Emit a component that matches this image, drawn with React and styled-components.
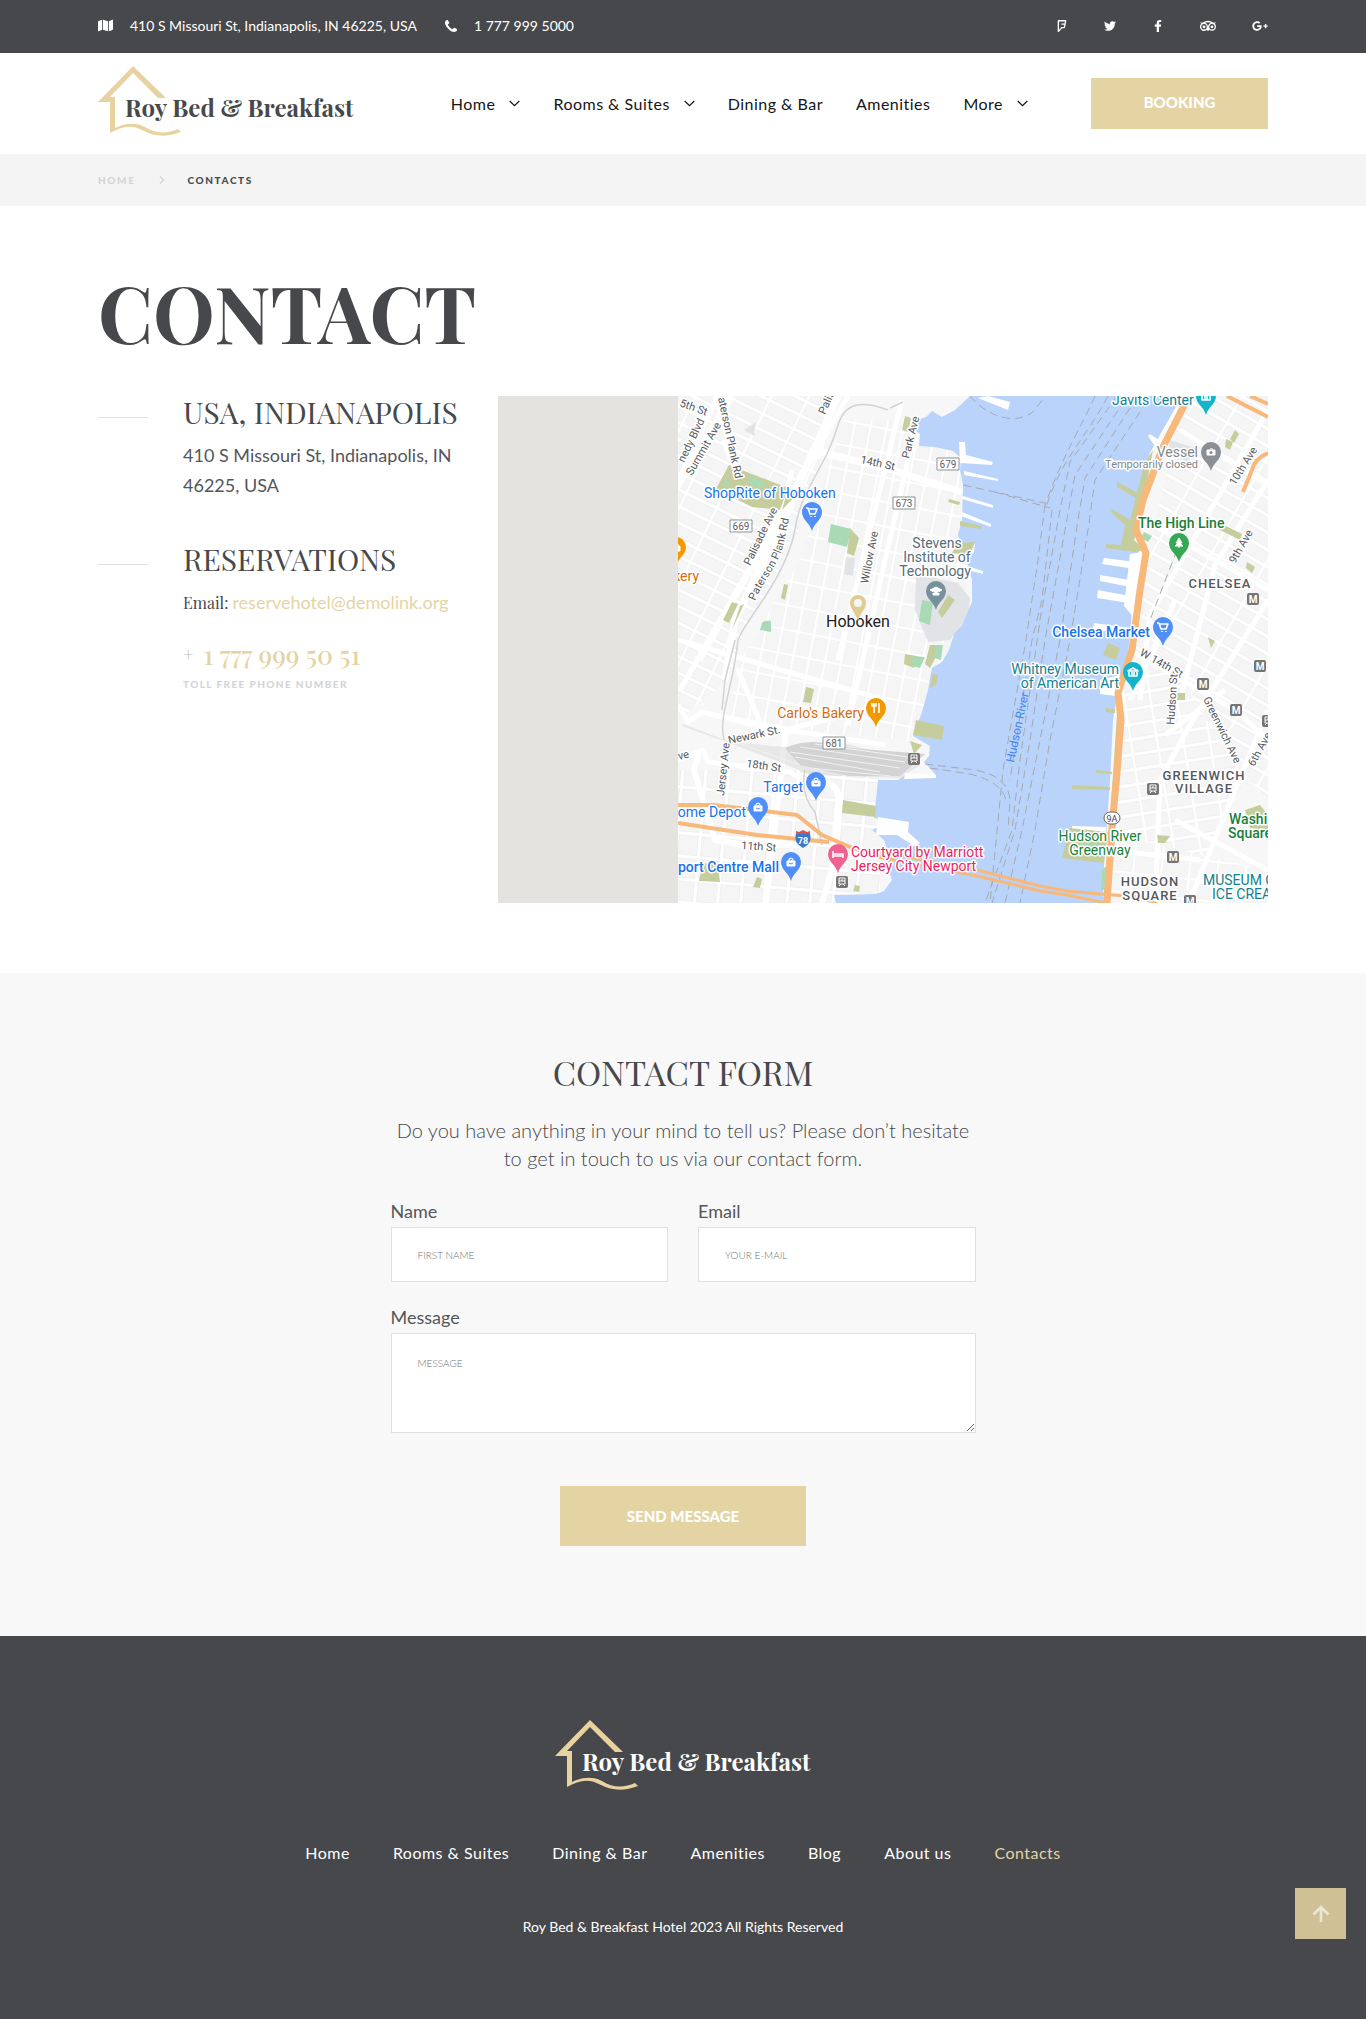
import React from "react";
import styled, { createGlobalStyle, css } from "styled-components";
import { FaMap, FaTwitter, FaFacebookF, FaFoursquare, FaTripadvisor, FaGooglePlusG } from "react-icons/fa";

const c = { dark: "#47484b", gold: "#e5d4a3", grey: "#f4f4f4", pale: "#f8f8f8", mute: "#d3d4d6", text: "#55565a" };
const serif = '"Playfair Display", "Liberation Serif", serif';

const Global = createGlobalStyle`
  *, *::before, *::after { box-sizing: border-box; }
  body { margin: 0; background: #fff; color: ${c.dark}; font-family: Lato, sans-serif; font-size: 16px; }
  a { color: inherit; text-decoration: none; }
  h1, h2, p { margin: 0; }
`;

const Container = styled.div`
  width: 100%;
  max-width: 1200px;
  margin: 0 auto;
  padding: 0 15px;
`;
const TopBar = styled.div`background: ${c.dark}; color: #fff;`;
const TopInner = styled(Container)`
  display: flex;
  justify-content: space-between;
  align-items: center;
  min-height: 53px;
  padding-bottom: 2px;
`;
const Contacts = styled.div`
  display: flex;
  gap: 28px;
  font-size: 14px;
  a { display: flex; align-items: center; gap: 17px; }
`;
const Socials = styled.div`
  display: flex;
  align-items: center;
  gap: 36px;
`;
const SocialLink = styled.a`
  display: flex;
  svg { display: block; width: auto; height: ${(p) => p.$size}px; }
`;
const HeaderInner = styled(Container)`
  display: flex;
  align-items: center;
  justify-content: space-between;
  min-height: 101px;
`;
const LogoSvg = styled.svg`
  display: block;
  overflow: visible;
  width: 256px;
  height: 76px;
  text { font: 700 24px ${serif}; fill: ${(p) => p.$ink}; }
`;
const HeaderRight = styled.div`display: flex; align-items: center; gap: 63px;`;
const Nav = styled.nav`
  display: flex;
  align-items: center;
  gap: 33px;
  color: #151515;
  letter-spacing: 0.03em;
  a { display: flex; align-items: center; gap: 14px; }
`;
const goldButton = css`
  display: flex;
  align-items: center;
  justify-content: center;
  border: 0;
  background: ${c.gold};
  color: #fff;
  font: 900 15px Lato, sans-serif;
  text-transform: uppercase;
  cursor: pointer;
`;
const Booking = styled.button`${goldButton} width: 177px; height: 51px; padding-bottom: 4px;`;
const Crumbs = styled.nav`background: ${c.grey}; font-size: 10px; font-weight: 900; letter-spacing: 0.16em;`;
const CrumbsInner = styled(Container)`
  display: flex;
  align-items: center;
  gap: 23px;
  min-height: 52px;
  color: ${c.mute};
`;
const Current = styled.span`color: ${c.dark};`;

const ContactSection = styled.section`padding: 64px 0 70px;`;
const Title = styled.h1`font: 700 78px/84px ${serif}; margin-bottom: 42px;`;
const Columns = styled.div`display: flex; gap: 30px;`;
const Details = styled.div`width: 370px; flex: none;`;
const Block = styled.article`
  display: grid;
  grid-template-columns: 50px 1fr;
  column-gap: 35px;
  margin-bottom: 43px;
  &::before { content: ""; height: 1px; margin-top: 21px; background: #e1e1e1; }
`;
const BlockTitle = styled.h2`font: 400 30px/32px ${serif}; margin-bottom: 12px; white-space: nowrap;`;
const Text = styled.p`font-size: 18px; line-height: 30px; color: ${c.text};`;
const EmailLine = styled(Text)`
  font-family: ${serif};
  font-size: 16px;
  color: ${c.dark};
  a { font-size: 18px; font-family: Lato, sans-serif; color: ${c.gold}; }
`;
const Phone = styled.a`
  display: flex;
  gap: 10px;
  margin-top: 20px;
  font: 500 26px/34px ${serif};
  color: ${c.gold};
  span { font-size: 18px; line-height: 32px; font-weight: 400; color: #bbb; }
`;
const Toll = styled.p`font-size: 10px; line-height: 24px; font-weight: 900; letter-spacing: 0.14em; color: ${c.mute};`;
const MapFrame = styled.div`flex: 1; min-width: 0; background: #e5e3df;`;
const MapSvg = styled.svg`display: block; width: 100%; height: 507px; font-family: Roboto, sans-serif;`;

const FormSection = styled.section`background: ${c.pale}; padding: 78px 15px 90px;`;
const Form = styled.form`max-width: 585px; margin: 0 auto; display: flex; flex-direction: column;`;
const FormTitle = styled.h2`font: 400 34px/42px ${serif}; text-align: center; margin-bottom: 23px;`;
const Lead = styled.p`font-size: 20px; line-height: 28px; font-weight: 300; text-align: center; margin-bottom: 25px;`;
const Row = styled.div`display: grid; grid-template-columns: 1fr 1fr; gap: 30px; margin-bottom: 21px;`;
const Field = styled.label`display: flex; flex-direction: column; gap: 2px; font-size: 18px; line-height: 28px; color: ${c.text};`;
const box = css`
  width: 100%;
  border: 1px solid #dfe0e6;
  border-radius: 0;
  background: #fff;
  font: 300 10px/14px Lato, sans-serif;
  color: ${c.dark};
  &::placeholder { color: #6f7074; opacity: 1; text-transform: uppercase; }
`;
const Input = styled.input`${box} height: 55px; padding: 0 26px;`;
const Area = styled.textarea`${box} height: 100px; padding: 22px 26px; resize: vertical;`;
const Send = styled.button`${goldButton} width: 246px; height: 60px; margin: 53px auto 0;`;

const Footer = styled.footer`
  background: ${c.dark};
  color: #fff;
  display: flex;
  flex-direction: column;
  align-items: center;
  padding: 84px 15px 81px;
`;
const FooterNav = styled.nav`
  display: flex;
  gap: 43px;
  margin: 45px 0 50px;
  line-height: 24px;
  letter-spacing: 0.03em;
`;
const FooterLink = styled.a`color: ${(p) => (p.$active ? c.gold : "#fff")};`;
const Copy = styled.p`font-size: 14px; line-height: 24px;`;
const ToTop = styled.button`
  position: fixed;
  right: 20px;
  bottom: 80px;
  width: 51px;
  height: 51px;
  display: grid;
  place-items: center;
  border: 0;
  background: #cfc195;
  color: #e9e6dd;
`;

const Logo = ({ ink }) => (
  <LogoSvg viewBox="0 0 256 76" $ink={ink} role="img" aria-label="Roy Bed & Breakfast">
    <path fill="#e8d3a0" d="M0 36 35 0 68 32H60L35 7 12 31H17V62C27 57 38 56 47 61 58 68 69 68 80 63L83 66C70 71 57 71 46 65 34 58 24 60 12 67V36Z" />
    <text x="27" y="51">Roy Bed &amp; Breakfast</text>
  </LogoSvg>
);

const PhoneIcon = () => (
  <svg width="12" height="12" viewBox="0 0 1408 1408" fill="currentColor" aria-hidden="true">
    <path d="M1408 1112q0 27-10 70.5t-20.5 68.5q-21 50-122 106-94 51-186 51-27 0-53-3.5t-57.5-12.5-47-14.5-55.5-20.5-49-18q-98-35-175-83-127-79-264-216t-216-264q-48-77-83-175-3-9-18-49t-20.5-55.5-14.5-47-12.5-57.5-3.5-53q0-92 51-186 56-101 106-122 25-10 68.5-20.5t70.5-10.5q14 0 21 3 18 6 53 76 11 19 30 54t35 63.5 31 53.5q3 4 17.5 25t21.5 35.5 7 28.5q0 20-28.5 50t-62 55-62 53-28.5 46q0 9 5 22.5t8.5 20.5 14 24 11.5 19q76 137 174 235t235 174q2 1 19 11.5t24 14 20.5 8.5 22.5 5q18 0 46-28.5t53-62 55-62 50-28.5q14 0 28.5 7t35.5 21.5 25 17.5q25 15 53.5 31t63.5 35 54 30q70 35 76 53 3 7 3 21z" />
  </svg>
);
const ChevronDown = () => (
  <svg width="11" height="7" viewBox="0 0 11 7" fill="none" stroke="currentColor" strokeWidth="1.2" aria-hidden="true"><path d="M.7 1 5.5 5.6 10.3 1" /></svg>
);
const ChevronRight = () => (
  <svg width="6" height="8" viewBox="0 0 6 8" fill="none" stroke="currentColor" strokeWidth="1.2" aria-hidden="true"><path d="M1 .5 4.6 4 1 7.5" /></svg>
);
const ArrowUp = () => (
  <svg width="18" height="18" viewBox="0 0 18 18" fill="none" stroke="currentColor" strokeWidth="2.6" aria-hidden="true"><path d="M9 17V2.500M1.500 9.500 9 2 16.500 9.500" /></svg>
);

const glyphs = {
  cart: "M-6-4h2l2 6h5l2-5h-8M-1 4v1M3 4v1",
  bag: "M-4-1h8v5h-8zM-2-1v-2q2-2 4 0v2",
  fork: "M-2-5v10M-4-5v3h4v-3M3-5v10",
  tree: "M0-5-3 0h2l-3 3h8l-3-3h2zM0 3v2",
  cap: "M-6-1 0-4 6-1 0 2zM-3 2v2h6v-2",
  bed: "M-5-3v7M-5 2H5V0h-9M5 2v2",
  museum: "M-5-1 0-4 5-1zM-4 0v4h8v-4M-1 0v4M1 0v4",
  camera: "M-4-2h8v5h-8zM-1-3h3M0 0v1",
};
const solid = ["bag", "tree", "cap", "camera"];
const Pin = ({ x, y, fill, glyph }) => (
  <g transform={`translate(${x} ${y})`}>
    <path d="M0 19C-2 11-10 8-10 0A10 10 0 0 1 10 0C10 8 2 11 0 19Z" fill={fill} />
    <path d={glyphs[glyph]} fill={solid.includes(glyph) ? "#fff" : "none"} stroke="#fff" strokeWidth={solid.includes(glyph) ? 1 : 1.6} />
    {glyph === "bag" && <path d="M-2 1Q0 3 2 1M-1-1.5V-2.500Q0-3.200 1-2.500V-1.500" stroke={fill} fill="none" />}
    {glyph === "camera" && <circle cx="0" cy=".5" r="1.6" fill={fill} />}
  </g>
);
const pins = [
  [812, 512, "#4f8ff7", "cart"], [676, 547, "#f29900", "bag"], [1206, 396, "#12b5cb", "museum"], [1211, 452, "#8a8f96", "camera"],
  [1179, 543, "#34a853", "tree"], [1163, 627, "#4f8ff7", "cart"], [936, 591, "#78909c", "cap"], [876, 708, "#f29900", "fork"],
  [816, 782, "#4f8ff7", "bag"], [758, 807, "#4f8ff7", "bag"], [791, 862, "#4f8ff7", "bag"], [838, 854, "#f06292", "bed"], [1133, 672, "#12b5cb", "museum"],
];
const blue = "#1a73e8", teal = "#12818f", green = "#188038", orange = "#d56e0c", pink = "#e91e63", slate = "#546e7a", gray = "#80868b", street = "#55585d";
/* x, baseline, text, colour, anchor, weight, size */
const places = [
  [704, 498, "ShopRite of Hoboken", blue], [699, 581, "kery", orange, "end"], [1112, 405, "Javits Center", teal],
  [1198, 457, "Vessel", gray, "end"], [1198, 468, "Temporarily closed", gray, "end", 400, 11], [1138, 528, "The High Line", green, "start", 500],
  [1150, 637, "Chelsea Market", blue, "end", 500], [937, 548, "Stevens", slate, "middle"], [937, 562, "Institute of", slate, "middle"],
  [935, 576, "Technology", slate, "middle"], [864, 718, "Carlo's Bakery", orange, "end"], [803, 792, "Target", blue, "end"],
  [746, 817, "ome Depot", blue, "end"], [779, 872, "port Centre Mall", blue, "end", 500], [851, 857, "Courtyard by Marriott", pink],
  [851, 871, "Jersey City Newport", pink], [1119, 674, "Whitney Museum", teal, "end"], [1119, 688, "of American Art", teal, "end"],
  [1100, 841, "Hudson River", green, "middle"], [1100, 855, "Greenway", green, "middle"], [1229, 824, "Washi", green, "start", 500],
  [1228, 838, "Square", green, "start", 500], [1203, 885, "MUSEUM O", teal], [1212, 899, "ICE CREA", teal],
];
const areas = [[1220, 588, "CHELSEA"], [1204, 780, "GREENWICH"], [1204, 793, "VILLAGE"], [1150, 886, "HUDSON"], [1150, 900, "SQUARE"]];
/* x, baseline, angle, text */
const streets = [
  [679, 406, 20, "5th St"], [684, 463, -64, "nedy Blvd"], [692, 476, -60, "Summit Ave"], [718, 398, 78, "aterson Plank Rd"],
  [825, 415, -66, "Palis"], [860, 463, 12, "14th St"], [750, 566, -64, "Palisade Ave"], [868, 584, -79, "Willow Ave"],
  [909, 459, -76, "Park Ave"], [1235, 486, -58, "10th Ave"], [1235, 564, -60, "9th Ave"], [729, 744, -12, "Newark St."],
  [724, 796, -84, "Jersey Ave"], [746, 767, 8, "18th St"], [679, 760, -14, "ve"], [741, 849, 4, "11th St"],
  [1139, 655, 29, "W 14th St"], [1174, 725, -86, "Hudson St"], [1203, 699, 64, "Greenwich Ave"], [1254, 767, -61, "6th Ave"],
];
const shields = [[741, 526, "669"], [948, 464, "679"], [904, 503, "673"], [834, 743, "681"]];
const stations = [[1253, 599, "M"], [1260, 666, "M"], [1203, 684, "M"], [1236, 710, "M"], [1173, 857, "M"], [1190, 901, "M"], [914, 759], [1153, 789], [1268, 721], [842, 882]];

const Grid = ({ id, w, h, angle }) => (
  <pattern id={id} width={w} height={h} patternUnits="userSpaceOnUse" patternTransform={`rotate(${angle})`}>
    <rect width={w} height={h} fill="#f5f5f6" />
    <path d={`M0 ${h / 2}H${w}M${w / 2} 0V${h}`} stroke="#e9eaec" strokeWidth="4" />
    <path d={`M0 ${h / 2}H${w}M${w / 2} 0V${h}`} stroke="#fff" strokeWidth="3" />
  </pattern>
);

const CityMap = () => (
  <MapSvg viewBox="498 396 770 507" preserveAspectRatio="xMidYMid slice" role="img" aria-label="Map of Hoboken">
    <defs>
      <clipPath id="tiles"><rect x="678" y="396" width="590" height="507" /></clipPath>
      <Grid id="heights" w={34} h={15} angle={26} />
      <Grid id="hoboken" w={16} h={24} angle={11} />
      <Grid id="jersey" w={23} h={23} angle={5} />
      <Grid id="chelsea" w={52} h={15} angle={30} />
      <Grid id="village" w={26} h={15} angle={-9} />
      <Grid id="soho" w={28} h={20} angle={6} />
      <path id="plank" d="M755 601C764 578 780 566 785 538L793 500" />
    </defs>
    <g clipPath="url(#tiles)" fill="none" strokeLinejoin="round">
      <rect x="678" y="396" width="590" height="507" fill="#f7f7f8" />
      <path fill="url(#heights)" d="M678 396H838L800 530 745 630 728 680 678 720Z" />
      <path fill="url(#hoboken)" d="M842 420H965V700L920 742 730 722 735 670 800 560Z" />
      <path fill="url(#jersey)" d="M678 770H880V903H678Z" />
      <path fill="url(#chelsea)" d="M1185 396H1268V800L1225 750 1125 650Z" />
      <path fill="url(#village)" d="M1120 690 1170 660 1225 750 1245 780 1205 860 1112 830Z" />
      <path fill="url(#soho)" d="M1112 835 1268 870V903H1100Z" />

      <g stroke="#fff" strokeWidth="5">
        <path d="M718 396 678 482M730 396 645 545M848 396 680 690M838 396 782 515 700 660M724 440 735 475 745 497 782 512 792 470" />
        <path strokeWidth="7" d="M838 396 780 525 735 620 725 680M820 452 885 468 962 492" />
        <path d="M902 400 838 660M915 430 885 560M885 560 848 725M678 640 885 700M738 670 760 722M678 705 688 722 702 712 760 726 885 745M785 730 885 705M678 760 703 750 708 762 790 772 812 785" />
        <path d="M786 730 766 903M700 750 694 770 715 840 745 845 800 845M716 396 740 480M820 780Q842 785 838 805L832 870 822 903" strokeWidth="6" />
        <path d="M1268 410 1150 615 1140 700M1268 480 1215 565 1180 700M1268 600 1190 725 1160 780 1155 903M1180 430 1268 485M1145 520 1268 590M1130 650 1235 710 1268 740M1268 710 1190 900M1175 820 1268 870M1110 850 1200 860M1165 735 1225 690M1175 600 1130 700" />
      </g>
      <g stroke="#d2d3d5" strokeWidth="1.5">
        <path d="M888 410C860 400 845 403 838 425 825 470 800 490 795 530 785 580 745 620 738 640 733 690 718 715 724 740M890 408 903 402M735 640 725 680 722 710M805 770Q800 795 815 812L822 845" />
      </g>
      <g fill="#d3d3d3">
        <path d="M682 726 735 745 780 762 810 775 900 778 920 765V755L880 753 840 742 785 747 730 742 683 724Z" opacity=".45" />
        <path d="M785 748Q810 736 850 748L925 754 900 776 850 776 800 765Z" />
      </g>
      <path d="M790 752 900 768M800 747 905 762M810 768 890 776M735 742 800 765M795 757 880 772M815 744 915 758" stroke="#f1f1f1" />
      <path fill="#e2e3e7" d="M916 576 934 578 958 583 970 598 969 615 950 640 928 642 915 610ZM744 430 756 422 754 436ZM846 557 855 558 853 576 844 574ZM1170 440 1195 448 1188 462 1168 452Z" />

      <path fill="#b9d3fb" d="M970 396 955 410 942 417 932 411 926 417 916 420 914 430 920 434 919 446 935 447 953 451 961 458 960 470 963 485 962 520 958 535 961 545 975 543 974 552 967 562 972 580 972 602 962 625 954 634 949 650 942 662 932 668 928 690 922 712 913 736 930 746 929 756 924 762 936 775 905 775 898 780 878 780 874 818 888 820 880 826 872 830 884 840 888 852 887 866 892 880 884 891 876 894 834 895 836 903H1103L1104 865 1110 780 1113 720 1118 690 1128 655 1133 600 1136 560 1140 548 1128 532 1136 500 1146 462 1160 435 1180 400 1182 396Z" />
      <path fill="#fff" d="M878 817 909 822 908 832 920 843 914 846 897 835 876 835ZM988 396 1010 402 1008 410 978 398ZM959 442 965 442 966 455 993 462 992 465 960 463ZM964 471 998 479 998 481 964 475ZM963 496 993 505V508L962 499ZM962 512 991 524V527L961 516ZM960 564 983 571V574L960 568ZM1104 558 1136 562 1135 569 1102 564ZM1100 575 1135 581V588L1100 581ZM1098 590 1135 597V604L1097 598ZM1094 623 1130 628V635L1093 629ZM1100 680 1120 675 1116 696 1100 694ZM905 773 936 775V778L904 779ZM1072 826 1106 827 1105 840H1072ZM1130 554 1142 552 1136 620 1124 606ZM1148 436 1150 434 1162 442 1156 448Z" />
      <path stroke="#fff" strokeWidth="2" d="M1150 455 1180 402" />

      <g fill="#c6cd9c">
        <path d="M729 465 788 488 780 510 752 507 716 489ZM788 488 799 492 782 510ZM850 528 859 538 854 556 847 553ZM905 416 911 418 908 432 902 430ZM949 499 960 502 959 505 948 502ZM960 521 982 526 981 529 960 526ZM958 543 975 542 970 555 952 553ZM732 602 738 604 729 623 723 620ZM740 606 744 604 732 630ZM784 584 788 585 785 600 781 598ZM806 687 814 689 811 703 803 702ZM916 720 944 726 942 740 913 735ZM910 741 922 745 914 754ZM843 800 876 806 875 817 842 813ZM703 863 718 865 720 882 699 881ZM757 877 762 879 760 888 753 887ZM855 885 860 886 859 892 853 891Z" />
        <path d="M1145 462 1153 450 1142 510 1134 540 1145 550 1135 552 1106 548V544L1121 545 1125 525 1111 512 1112 509 1130 520ZM1117 482 1138 493 1136 498 1117 487ZM1118 698 1110 820 1103 903H1109L1122 720ZM1106 708 1115 709V713L1106 712ZM1096 770 1112 772V774L1096 773ZM1072 785 1110 787V790L1072 789ZM1070 828 1108 832 1104 863 1062 858ZM1222 524 1242 534 1240 540 1218 529ZM1247 562 1255 567 1252 573 1246 568ZM1208 637 1215 641 1211 648ZM1177 693 1185 693V700H1177ZM1157 835 1170 836 1165 843H1158ZM1245 810 1260 805 1268 815V830L1250 828ZM1108 643 1120 648 1116 660 1103 655ZM1235 430 1239 434 1234 443 1230 439ZM1226 439 1233 442 1230 450 1225 447Z" />
        <path d="M905 654 917 656 914 668 904 664ZM930 645 942 645 930 668 925 664ZM932 674 938 675 936 685 930 688ZM948 595 955 600 942 618 938 612Z" />
      </g>
      <path fill="#a8dab5" d="M831 524 851 529 847 547 828 542ZM750 476 766 483 762 489 748 483ZM725 479 731 484 722 488ZM922 600 933 602 930 625 919 621ZM936 645 943 645 941 660 934 658ZM762 623Q764 620 771 621V632L760 630ZM913 656 925 657 920 668 912 666ZM1144 532 1152 536 1148 542 1141 538ZM1080 842 1105 845 1104 855 1080 850ZM1102 870 1107 865 1106 890H1101Z" />

      <g stroke="#a5a9b0" strokeDasharray="8 5" strokeWidth="1">
        <path d="M1095 396C1080 430 1065 450 1045 505M1108 396C1085 440 1060 460 1046 508M1117 396 1070 462 1060 510 1040 620 1020 760 1012 830 985 903M1125 400 1075 475 1065 530 1045 640 1030 740 1015 830 992 903M1130 408 1085 478 1078 520 1060 640 1040 740 1022 830 1005 903M1140 412 1095 480 1088 530 1070 640 1050 740 1035 830 1020 903M1045 505 1038 560 1026 640 1003 770 990 903M1052 510 1042 600 1032 640 1010 780M963 485 1045 503M995 492 1050 508M925 764 975 770Q1008 776 1010 800L1008 830M930 768 970 774Q1002 782 1006 800M970 396C990 420 1020 425 1035 410L1045 396M1177 550 1150 620" />
      </g>
      <g stroke="#f7b87a" strokeWidth="8">
        <path strokeWidth="7" d="M1189 396 1163 447 1143 500 1136 530 1146 553 1140 590 1132 650 1118 693 1121 720 1117 773 1112 827 1107 903" />
        <path strokeWidth="4" d="M678 805H713L797 815 822 835 850 847 890 860M678 823 757 835 829 842" />
        <path strokeWidth="3" d="M880 857 977 876 1040 891 1067 895 1105 903M880 852 977 870 1040 886 1067 891 1100 894 1140 897 1160 905" />
        <path strokeWidth="4" d="M1227 396 1268 417M1250 396 1268 404M1268 453Q1255 458 1252 470L1243 492" />
      </g>

      <g fontSize="11" fill={street} stroke="#fff" strokeWidth="3" paintOrder="stroke">
        {streets.map(([x, y, a, t]) => <text key={t + x} transform={`translate(${x} ${y}) rotate(${a})`}>{t}</text>)}
        <text><textPath href="#plank">Paterson Plank Rd</textPath></text>
      </g>
      <text transform="translate(1014 763) rotate(-78)" fontSize="12" fill="#4285f4">Hudson River</text>
      {shields.map(([x, y, t]) => (
        <g key={t}><rect x={x - 11} y={y - 6} width="22" height="12" fill="#fff" stroke="#8e9196" /><text x={x} y={y + 4} fontSize="10" fill="#5f6368" textAnchor="middle">{t}</text></g>
      ))}
      {stations.map(([x, y, t]) => (
        <g key={`${x}-${y}`} transform={`translate(${x} ${y})`}>
          <rect x="-6" y="-6" width="12" height="12" rx="2" fill="#757575" />
          {t ? <text y="4" fontSize="10" fontWeight="700" fill="#fff" textAnchor="middle">{t}</text> : <path d="M-3-4H3V2H-3ZM-3 4-1 2M3 4 1 2M-3-1H3M0-3V-1" stroke="#fff" />}
        </g>
      ))}
      {pins.map(([x, y, f, g]) => <Pin key={`${x}-${y}`} x={x} y={y} fill={f} glyph={g} />)}
      <g stroke="#fff" strokeWidth="3" paintOrder="stroke">
        {places.map(([x, y, t, f, anchor = "start", w = 400, s = 14]) => (
          <text key={t} x={x} y={y} fill={f} textAnchor={anchor} fontWeight={w} fontSize={s}>{t}</text>
        ))}
        {areas.map(([x, y, t]) => <text key={t} x={x} y={y} fill="#55585d" textAnchor="middle" fontSize="13" fontWeight="500" letterSpacing="1">{t}</text>)}
        <text x="826" y="627" fontSize="16" fill="#202124">Hoboken</text>
      </g>
      <path fillRule="evenodd" fill="#e0cc93" d="M858 621C856 613 850 609 850 603A8 8 0 0 1 866 603C866 609 860 613 858 621ZM858 599A4 4 0 1 0 858 607 4 4 0 1 0 858 599Z" />
      <rect x="1104" y="812" width="16" height="12" rx="6" fill="#fff" stroke="#666" />
      <text x="1112" y="822" fontSize="9" fill="#444" textAnchor="middle">9A</text>
      <path fill="#3b78c9" d="M796 834H810Q813 843 803 848 793 843 796 834Z" />
      <path fill="#d9534f" d="M796 831 799 832 803 830 807 832 810 831V834H796Z" />
      <text x="803" y="844" fontSize="9" fontWeight="700" fill="#fff" textAnchor="middle">78</text>
    </g>
  </MapSvg>
);

const mainNav = [["Home", true], ["Rooms & Suites", true], ["Dining & Bar"], ["Amenities"], ["More", true]];
const footerNav = ["Home", "Rooms & Suites", "Dining & Bar", "Amenities", "Blog", "About us", "Contacts"];
const socials = [["Foursquare", FaFoursquare, 12], ["Twitter", FaTwitter, 12], ["Facebook", FaFacebookF, 12], ["Tripadvisor", FaTripadvisor, 16], ["Google Plus", FaGooglePlusG, 16]];

export default function App() {
  return (
    <>
      <Global />
      <header>
        <TopBar>
          <TopInner>
            <Contacts>
              <a href="#map"><FaMap size={15} />410 S Missouri St, Indianapolis, IN 46225, USA</a>
              <a href="tel:17779995000"><PhoneIcon />1 777 999 5000</a>
            </Contacts>
            <Socials>
              {socials.map(([name, Icon, size]) => <SocialLink key={name} href="#" aria-label={name} $size={size}><Icon /></SocialLink>)}
            </Socials>
          </TopInner>
        </TopBar>
        <HeaderInner>
          <a href="#"><Logo ink={c.dark} /></a>
          <HeaderRight>
            <Nav>
              {mainNav.map(([label, sub]) => <a key={label} href="#">{label}{sub && <ChevronDown />}</a>)}
            </Nav>
            <Booking type="button">Booking</Booking>
          </HeaderRight>
        </HeaderInner>
        <Crumbs aria-label="Breadcrumb">
          <CrumbsInner><a href="#">HOME</a><ChevronRight /><Current>CONTACTS</Current></CrumbsInner>
        </Crumbs>
      </header>
      <main>
        <ContactSection>
          <Container>
            <Title>CONTACT</Title>
            <Columns>
              <Details>
                <Block>
                  <div>
                    <BlockTitle>USA, INDIANAPOLIS</BlockTitle>
                    <Text>410 S Missouri St, Indianapolis, IN 46225, USA</Text>
                  </div>
                </Block>
                <Block>
                  <div>
                    <BlockTitle>RESERVATIONS</BlockTitle>
                    <EmailLine>Email: <a href="mailto:reservehotel@demolink.org">reservehotel@demolink.org</a></EmailLine>
                    <Phone href="tel:17779995051"><span>+</span>1 777 999 50 51</Phone>
                    <Toll>TOLL FREE PHONE NUMBER</Toll>
                  </div>
                </Block>
              </Details>
              <MapFrame id="map"><CityMap /></MapFrame>
            </Columns>
          </Container>
        </ContactSection>
        <FormSection>
          <Form onSubmit={(e) => e.preventDefault()}>
            <FormTitle>CONTACT FORM</FormTitle>
            <Lead>Do you have anything in your mind to tell us? Please don’t hesitate to get in touch to us via our contact form.</Lead>
            <Row>
              <Field>Name<Input placeholder="First name" /></Field>
              <Field>Email<Input type="email" placeholder="Your e-mail" /></Field>
            </Row>
            <Field>Message<Area placeholder="Message" /></Field>
            <Send type="submit">Send message</Send>
          </Form>
        </FormSection>
      </main>
      <Footer>
        <a href="#"><Logo ink="#fff" /></a>
        <FooterNav>
          {footerNav.map((label) => <FooterLink key={label} href="#" $active={label === "Contacts"}>{label}</FooterLink>)}
        </FooterNav>
        <Copy>Roy Bed &amp; Breakfast Hotel 2023 All Rights Reserved</Copy>
      </Footer>
      <ToTop type="button" aria-label="Back to top"><ArrowUp /></ToTop>
    </>
  );
}
